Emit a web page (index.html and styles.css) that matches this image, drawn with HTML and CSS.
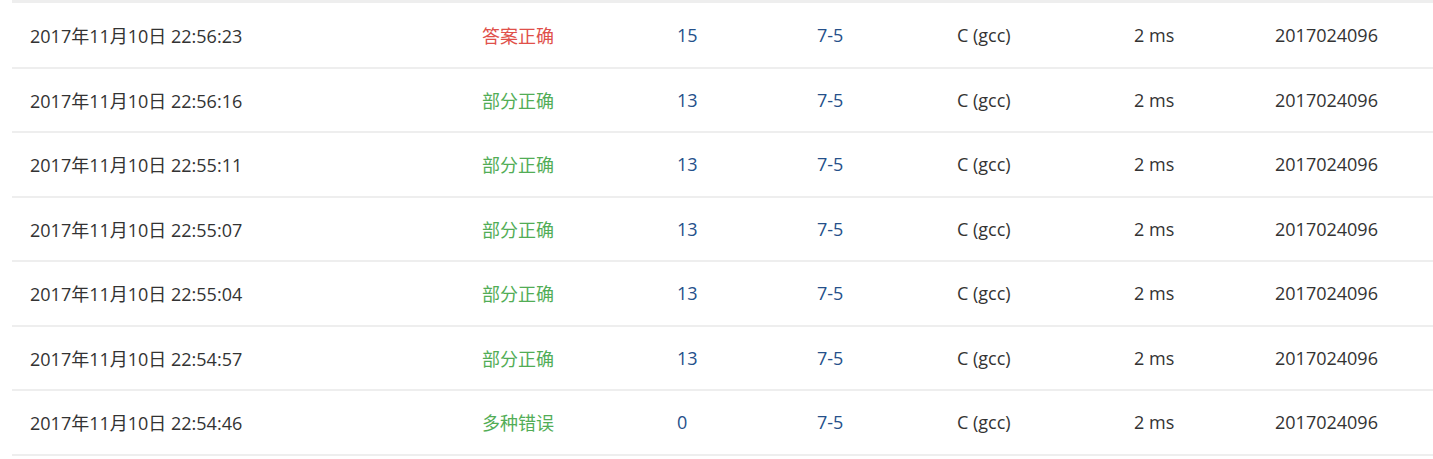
FILE: index.html
```html
<!DOCTYPE html>
<html lang="zh">
<head>
<meta charset="utf-8">
<link rel="stylesheet" href="styles.css">
</head>
<body>
<div class="table">
  <div class="row">
    <div class="cell c-date">2017年11月10日 22:56:23</div>
    <div class="cell c-status red">答案正确</div>
    <div class="cell c-score blue">15</div>
    <div class="cell c-prob blue">7-5</div>
    <div class="cell c-comp">C (gcc)</div>
    <div class="cell c-time">2 ms</div>
    <div class="cell c-user">2017024096</div>
  </div>
  <div class="row">
    <div class="cell c-date">2017年11月10日 22:56:16</div>
    <div class="cell c-status green">部分正确</div>
    <div class="cell c-score blue">13</div>
    <div class="cell c-prob blue">7-5</div>
    <div class="cell c-comp">C (gcc)</div>
    <div class="cell c-time">2 ms</div>
    <div class="cell c-user">2017024096</div>
  </div>
  <div class="row">
    <div class="cell c-date">2017年11月10日 22:55:11</div>
    <div class="cell c-status green">部分正确</div>
    <div class="cell c-score blue">13</div>
    <div class="cell c-prob blue">7-5</div>
    <div class="cell c-comp">C (gcc)</div>
    <div class="cell c-time">2 ms</div>
    <div class="cell c-user">2017024096</div>
  </div>
  <div class="row">
    <div class="cell c-date">2017年11月10日 22:55:07</div>
    <div class="cell c-status green">部分正确</div>
    <div class="cell c-score blue">13</div>
    <div class="cell c-prob blue">7-5</div>
    <div class="cell c-comp">C (gcc)</div>
    <div class="cell c-time">2 ms</div>
    <div class="cell c-user">2017024096</div>
  </div>
  <div class="row">
    <div class="cell c-date">2017年11月10日 22:55:04</div>
    <div class="cell c-status green">部分正确</div>
    <div class="cell c-score blue">13</div>
    <div class="cell c-prob blue">7-5</div>
    <div class="cell c-comp">C (gcc)</div>
    <div class="cell c-time">2 ms</div>
    <div class="cell c-user">2017024096</div>
  </div>
  <div class="row">
    <div class="cell c-date">2017年11月10日 22:54:57</div>
    <div class="cell c-status green">部分正确</div>
    <div class="cell c-score blue">13</div>
    <div class="cell c-prob blue">7-5</div>
    <div class="cell c-comp">C (gcc)</div>
    <div class="cell c-time">2 ms</div>
    <div class="cell c-user">2017024096</div>
  </div>
  <div class="row">
    <div class="cell c-date">2017年11月10日 22:54:46</div>
    <div class="cell c-status green">多种错误</div>
    <div class="cell c-score blue">0</div>
    <div class="cell c-prob blue">7-5</div>
    <div class="cell c-comp">C (gcc)</div>
    <div class="cell c-time">2 ms</div>
    <div class="cell c-user">2017024096</div>
  </div>
</div>
</body>
</html>
```
FILE: styles.css
```css
html, body {
  margin: 0;
  padding: 0;
  background: #ffffff;
}
body {
  font-family: "Open Sans", "Noto Sans CJK SC", sans-serif;
  font-size: 18px;
  color: #333333;
  overflow: hidden;
}
.table {
  margin-left: 12px;
  width: 1440px;
  border-top: 3px solid #eeeeee;
  padding-top: 1px;
}
.row {
  display: grid;
  grid-template-columns: 452px 195px 140px 140px 177px 141px 1fr;
  height: 62.5px;
  align-items: center;
  border-bottom: 2px solid #eeeeee;
}
.cell {
  padding-left: 18px;
  white-space: nowrap;
}
.red { color: #e0504a; }
.green { color: #52ad56; }
.blue { color: #25508a; }
```
